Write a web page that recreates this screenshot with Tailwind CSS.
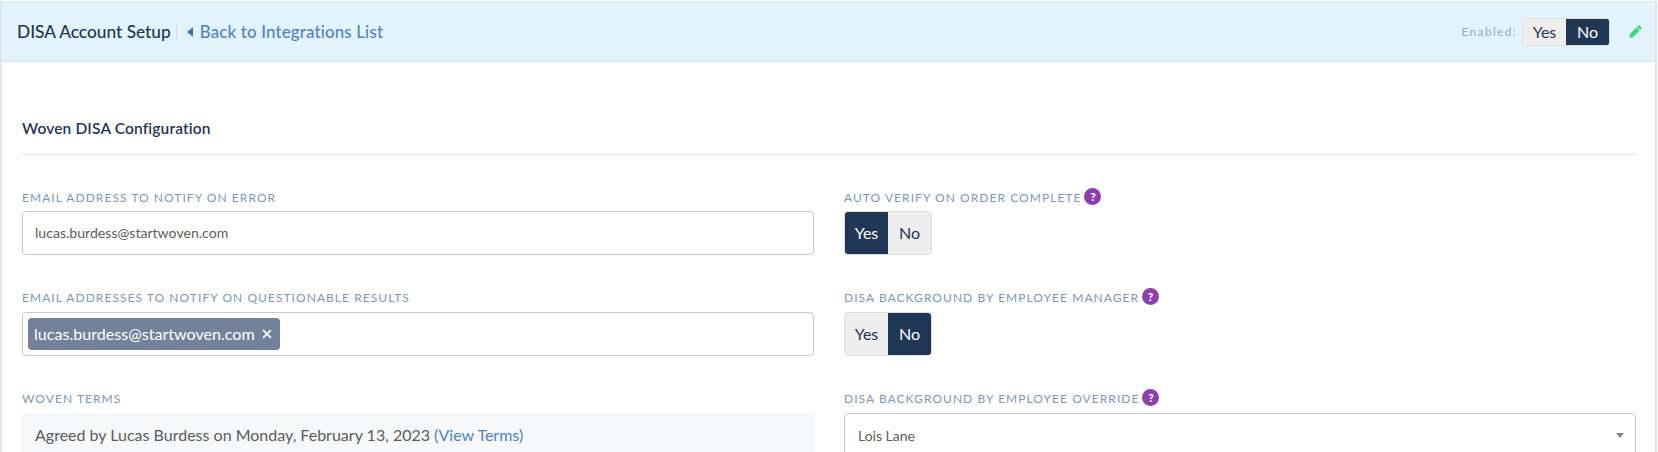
<!DOCTYPE html>
<html lang="en">
<head>
    <meta charset="UTF-8">
    <script src="https://cdn.jsdelivr.net/npm/@tailwindcss/browser@4"></script>
    <title>DISA Account Setup</title>
</head>
<body class="bg-white font-['Lato','Noto_Sans',sans-serif] h-[452px] overflow-hidden">
  <div class="mt-px mr-px border-t border-x-2 border-[#dfe5ea] h-[451px] overflow-hidden">
    <!-- header -->
    <div class="h-[60px] bg-[#e2f3fb] border-b border-[#d9e3e9] flex items-center pl-[15px] pr-[13px]">
      <div class="text-[17.3px] text-[#1f3655] font-medium pr-[5px] border-r border-[#d5dfe5] leading-[20px]">DISA Account Setup</div>
      <a class="ml-[10px] flex items-center text-[16.8px] text-[#4f84c0] font-medium tracking-[0.2px]">
        <svg class="w-[6px] h-[10px] mr-[7px]" viewBox="0 0 6 10"><path d="M6 0v10L0 5z" fill="#3f74b3"/></svg>
        Back to Integrations List
      </a>
      <div class="ml-auto flex items-center">
        <span class="text-[12px] tracking-[1.3px] text-[#9aabbb] mr-[5px]">Enabled:</span>
        <div class="flex w-[88px] h-[28px] text-[16px] rounded-[3px] overflow-hidden border border-[#dcdfe2]">
          <div class="w-1/2 bg-[#eeeeee] text-[#1f3655] flex items-center justify-center">Yes</div>
          <div class="w-1/2 bg-[#1f3655] text-white flex items-center justify-center">No</div>
        </div>
        <svg class="w-[13px] h-[13px] ml-[19px]" viewBox="0 0 512 512"><path fill="#34d77e" d="M290 102l120 120-261 261-107 12c-14 2-27-11-25-25l12-107zM484 84l-56-56c-18-18-46-18-64 0l-53 53 120 120 53-53c18-18 18-46 0-64z"/></svg>
      </div>
    </div>

    <div class="pl-[20px] pr-[19px]">
      <h2 class="pt-[56px] pb-[16px] text-[15.5px] font-semibold tracking-[0.15px] text-[#1f3655] leading-[20px] border-b border-[#e3e6e8]">Woven DISA Configuration</h2>

      <div class="grid grid-cols-2 gap-x-[30px] pt-[35px]">
        <div class="flex flex-col">
          <label class="h-[15px] text-[12px] leading-[15px] tracking-[1.05px] text-[#7f97b2]">EMAIL ADDRESS TO NOTIFY ON ERROR</label>
          <div class="mt-[6px] h-[44px] border border-[#c9c9c9] rounded-[4px] flex items-center pl-[12px] text-[14.1px] text-[#5c5c5c]">lucas.burdess@startwoven.com</div>

          <label class="mt-[35px] h-[15px] text-[12px] leading-[15px] tracking-[1.05px] text-[#7f97b2]">EMAIL ADDRESSES TO NOTIFY ON QUESTIONABLE RESULTS</label>
          <div class="mt-[7px] h-[44px] border border-[#c9c9c9] rounded-[4px] flex items-center pl-[5px]">
            <span class="h-[32px] bg-[#73819a] rounded-[4px] text-white text-[16.1px] flex items-center pl-[6px] pr-[8px]">lucas.burdess@startwoven.com
              <svg class="w-[10px] h-[10px] ml-[7px]" viewBox="0 0 9 9"><path d="M1 1l7 7M8 1l-7 7" stroke="#fff" stroke-width="1.6"/></svg>
            </span>
          </div>

          <label class="mt-[35px] h-[15px] text-[12px] leading-[15px] tracking-[1.05px] text-[#7f97b2]">WOVEN TERMS</label>
          <div class="mt-[7px] h-[44px] bg-[#f6f8fa] flex items-center pl-[13px] text-[16px] text-[#5c5c5c]">
            <span>Agreed by Lucas Burdess on Monday, February 13, 2023 <a class="text-[#4f84c0]">(View Terms)</a></span>
          </div>
        </div>

        <div class="flex flex-col">
          <label class="h-[15px] text-[12px] leading-[15px] tracking-[1.05px] text-[#7f97b2] flex items-center gap-[3px]">AUTO VERIFY ON ORDER COMPLETE
            <span class="mb-[3px] w-[17px] h-[17px] rounded-full bg-[#8e3fae] text-white text-[12px] font-black flex items-center justify-center tracking-normal">?</span>
          </label>
          <div class="mt-[6px] flex w-[88px] h-[44px] text-[16px] rounded-[4px] overflow-hidden border border-[#dcdfe2]">
            <div class="w-1/2 bg-[#1f3655] text-white flex items-center justify-center">Yes</div>
            <div class="w-1/2 bg-[#eeeeee] text-[#1f3655] flex items-center justify-center">No</div>
          </div>

          <label class="mt-[35px] h-[15px] text-[12px] leading-[15px] tracking-[1.05px] text-[#7f97b2] flex items-center gap-[3px]">DISA BACKGROUND BY EMPLOYEE MANAGER
            <span class="mb-[3px] w-[17px] h-[17px] rounded-full bg-[#8e3fae] text-white text-[12px] font-black flex items-center justify-center tracking-normal">?</span>
          </label>
          <div class="mt-[7px] flex w-[88px] h-[44px] text-[16px] rounded-[4px] overflow-hidden border border-[#dcdfe2]">
            <div class="w-1/2 bg-[#eeeeee] text-[#1f3655] flex items-center justify-center">Yes</div>
            <div class="w-1/2 bg-[#1f3655] text-white flex items-center justify-center">No</div>
          </div>

          <label class="mt-[35px] h-[15px] text-[12px] leading-[15px] tracking-[1.05px] text-[#7f97b2] flex items-center gap-[3px]">DISA BACKGROUND BY EMPLOYEE OVERRIDE
            <span class="mb-[3px] w-[17px] h-[17px] rounded-full bg-[#8e3fae] text-white text-[12px] font-black flex items-center justify-center tracking-normal">?</span>
          </label>
          <div class="mt-[7px] h-[44px] border border-[#c9c9c9] rounded-[4px] flex items-center justify-between pl-[13px] pr-[11px] text-[14px] text-[#5c5c5c]">
            Lois Lane
            <svg class="w-[8px] h-[5px]" viewBox="0 0 8 5"><path d="M0 0h8L4 5z" fill="#888888"/></svg>
          </div>
        </div>
      </div>
    </div>
  </div>
</body>
</html>
